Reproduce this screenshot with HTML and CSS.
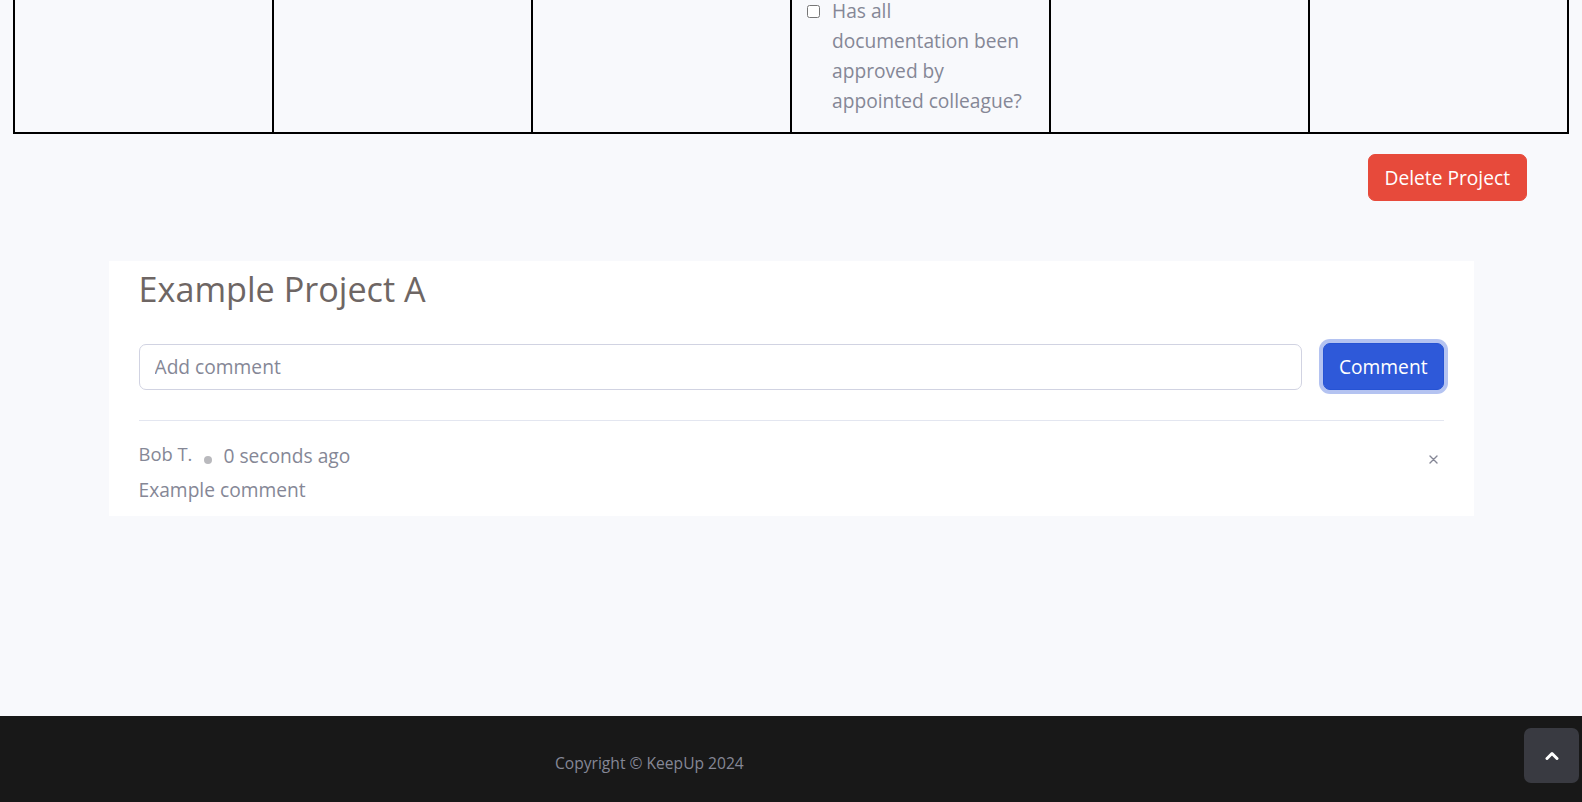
FILE: index.html
```html
<!DOCTYPE html>
<html lang="en">
<head>
<meta charset="utf-8">
<title>Example Project A</title>
<link rel="stylesheet" href="styles.css">
</head>
<body>
<div class="page">
  <main class="content">
    <div class="table-wrap">
      <table class="checklist">
        <tr>
          <td></td>
          <td></td>
          <td></td>
          <td>
            <label class="check">
              <input type="checkbox">
              <span>Has all documentation been approved by appointed colleague?</span>
            </label>
          </td>
          <td></td>
          <td></td>
        </tr>
      </table>
    </div>

    <div class="actions">
      <button class="btn btn-danger" type="button">Delete Project</button>
    </div>

    <section class="card">
      <h3 class="card-title">Example Project A</h3>
      <form class="comment-form">
        <input class="form-control" type="text" placeholder="Add comment">
        <button class="btn btn-primary is-focused" type="button">Comment</button>
      </form>
      <hr class="divider">
      <div class="comment">
        <div class="meta">
          <span class="meta-info">
            <span class="author">Bob T.</span><span class="dot"></span><span class="time">0 seconds ago</span>
          </span>
          <button class="close" type="button" aria-label="Delete comment">
            <svg width="9" height="9" viewBox="0 0 9 9"><path d="M1 1 L8 8 M8 1 L1 8" stroke="#858796" stroke-width="1.4" stroke-linecap="round" fill="none"/></svg>
          </button>
        </div>
        <p class="comment-text">Example comment</p>
      </div>
    </section>
  </main>

  <footer class="footer">
    <span>Copyright © KeepUp 2024</span>
  </footer>
</div>

<a class="scroll-top" href="#" aria-label="Scroll to top">
  <svg width="14" height="9" viewBox="0 0 14 9"><polyline points="2,7.5 7,2.5 12,7.5" fill="none" stroke="#fff" stroke-width="3" stroke-linecap="round" stroke-linejoin="round"/></svg>
</a>
</body>
</html>
```

FILE: styles.css
```css
html, body {
  margin: 0;
  padding: 0;
}

body {
  background: #f8f9fc;
  font-family: "Open Sans", "Noto Sans", sans-serif;
  font-size: 19.2px;
  line-height: 30px;
  color: #858796;
}

.page {
  display: flex;
  flex-direction: column;
  min-height: 100vh;
}

.content {
  flex: 1;
}

/* table (scrolled partly out of view) */
.table-wrap {
  margin-top: -20px;
  padding: 0 13px;
}

.checklist {
  width: 100%;
  border-collapse: collapse;
  table-layout: fixed;
}

.checklist td {
  border: 2px solid #000;
  padding: 14px 22px 16px 14px;
  vertical-align: top;
}

.check {
  display: flex;
  gap: 12px;
  line-height: 30px;
}

.check input {
  flex: none;
  width: 13px;
  height: 13px;
  margin: 9px 0 0 1px;
}

/* actions */
.actions {
  display: flex;
  justify-content: flex-end;
  padding: 20px 55px 0 0;
}

.btn {
  font-family: inherit;
  font-size: 19.2px;
  line-height: 30px;
  padding: 7.5px 15px;
  border: 1px solid transparent;
  border-radius: 7px;
  color: #fff;
  cursor: pointer;
}

.btn-danger {
  background: #e74a3b;
  border-color: #e74a3b;
  padding-left: 16px;
  padding-right: 16px;
}

.btn-primary {
  background: #2e59d9;
  border-color: #2653d4;
}

.btn-primary.is-focused {
  box-shadow: 0 0 0 4px rgba(105, 136, 228, 0.5);
}

/* card */
.card {
  box-sizing: border-box;
  width: 1365px;
  margin: 60px auto 0;
  background: #fff;
  padding: 7px 30px 11px;
}

.card-title {
  margin: 0;
  font-size: 34.2px;
  line-height: 42px;
  font-weight: 400;
  color: #6e6664;
}

.comment-form {
  display: flex;
  align-items: center;
  gap: 21px;
  margin: 33px 0 0;
}

.form-control {
  flex: 1;
  box-sizing: border-box;
  height: 46px;
  padding: 0 15px;
  border: 1px solid #d1d3e2;
  border-radius: 7px;
  font-family: inherit;
  font-size: 19.2px;
  color: #6e707e;
  background: #fff;
}

.form-control::placeholder {
  color: #858796;
}

.divider {
  margin: 30px 0 0;
  border: 0;
  border-top: 1px solid #e3e6f0;
}

.comment {
  padding-top: 18px;
}

.meta {
  display: flex;
  align-items: center;
}

.meta-info {
  flex: 1;
}

.author {
  font-size: 18.4px;
  vertical-align: 2px;
}

.dot {
  display: inline-block;
  width: 8px;
  height: 8px;
  border-radius: 50%;
  background: #b9b9bd;
  margin: 0 11px 0 12px;
  vertical-align: -1px;
}

.close {
  border: 0;
  background: none;
  padding: 9px 0 0 0;
  margin-right: 6px;
  display: flex;
  cursor: pointer;
}

.comment-text {
  margin: 4px 0 0;
}

/* footer */
.footer {
  box-sizing: border-box;
  height: 86px;
  background: #181818;
  padding: 35px 0 0 555px;
  font-size: 15.6px;
  line-height: 24px;
  color: #858796;
}

.scroll-top {
  position: fixed;
  right: 3px;
  bottom: 19px;
  width: 55px;
  height: 55px;
  border-radius: 7px;
  background: rgba(90, 92, 105, 0.5);
  display: flex;
  align-items: center;
  justify-content: center;
}
```
